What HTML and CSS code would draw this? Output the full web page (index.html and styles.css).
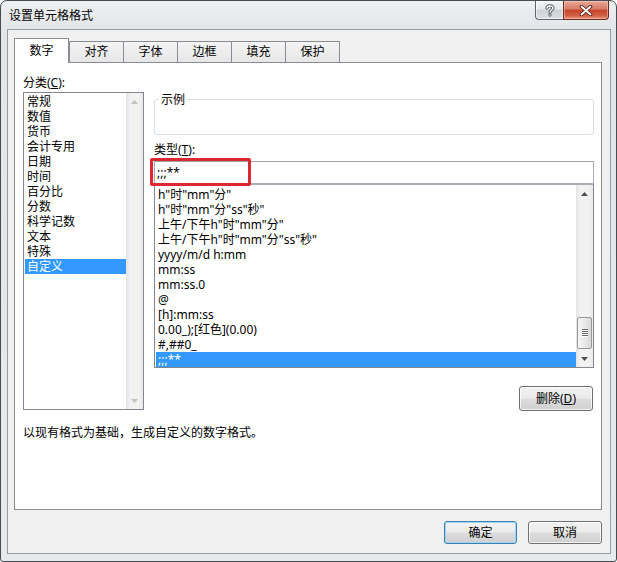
FILE: index.html
```html
<!DOCTYPE html>
<html lang="zh-CN">
<head>
<meta charset="utf-8">
<title>设置单元格格式</title>
<link rel="stylesheet" href="styles.css">
</head>
<body>
<div class="window">
  <div class="titlebar">
    <div class="title">设置单元格格式</div>
    <div class="caps">
      <div class="cap help">
        <svg width="10" height="13" viewBox="0 0 10 13">
          <path d="M2 4 C2 1.5 8 1 8 4 C8 6 5 6 5 8.3" fill="none" stroke="#4b5560" stroke-width="3.2" stroke-linecap="round"/>
          <circle cx="5" cy="11" r="1.6" fill="#4b5560"/>
          <path d="M2 4 C2 1.5 8 1 8 4 C8 6 5 6 5 8.3" fill="none" stroke="#ffffff" stroke-width="1.4" stroke-linecap="round"/>
          <circle cx="5" cy="11" r="0.8" fill="#ffffff"/>
        </svg>
      </div>
      <div class="cap close">
        <svg width="14" height="11" viewBox="0 0 14 11">
          <path d="M2.5 1.5 L11.5 9.5 M11.5 1.5 L2.5 9.5" stroke="#5a2016" stroke-width="3.6" stroke-linecap="round"/>
          <path d="M2.5 1.5 L11.5 9.5 M11.5 1.5 L2.5 9.5" stroke="#ffffff" stroke-width="1.8" stroke-linecap="round"/>
        </svg>
      </div>
    </div>
  </div>
  <div class="client">
    <div class="tabs">
      <div class="tab active">数字</div>
      <div class="tab">对齐</div>
      <div class="tab">字体</div>
      <div class="tab">边框</div>
      <div class="tab">填充</div>
      <div class="tab">保护</div>
    </div>
    <div class="panel">
      <div class="cols">
        <div class="left">
          <div class="label">分类(<u>C</u>):</div>
          <div class="listbox cat">
            <div class="items">
              <div class="item">常规</div>
              <div class="item">数值</div>
              <div class="item">货币</div>
              <div class="item">会计专用</div>
              <div class="item">日期</div>
              <div class="item">时间</div>
              <div class="item">百分比</div>
              <div class="item">分数</div>
              <div class="item">科学记数</div>
              <div class="item">文本</div>
              <div class="item">特殊</div>
              <div class="item sel">自定义</div>
            </div>
            <div class="vscroll disabled">
              <div class="arrow"><svg width="7" height="4" viewBox="0 0 7 4"><path d="M0 4 L3.5 0 L7 4 Z"/></svg></div>
              <div class="track"></div>
              <div class="arrow"><svg width="7" height="4" viewBox="0 0 7 4"><path d="M0 0 L3.5 4 L7 0 Z"/></svg></div>
            </div>
          </div>
        </div>
        <div class="right">
          <div class="sample">
            <div class="legend">示例</div>
          </div>
          <div class="label type-label">类型(<u>T</u>):</div>
          <div class="input">;;;**</div>
          <div class="listbox types">
            <div class="items">
              <div class="item">h"时"mm"分"</div>
              <div class="item">h"时"mm"分"ss"秒"</div>
              <div class="item">上午/下午h"时"mm"分"</div>
              <div class="item">上午/下午h"时"mm"分"ss"秒"</div>
              <div class="item">yyyy/m/d h:mm</div>
              <div class="item">mm:ss</div>
              <div class="item">mm:ss.0</div>
              <div class="item">@</div>
              <div class="item">[h]:mm:ss</div>
              <div class="item">0.00_);[红色](0.00)</div>
              <div class="item">#,##0_</div>
              <div class="item sel">;;;**</div>
            </div>
            <div class="vscroll">
              <div class="arrow"><svg width="7" height="4" viewBox="0 0 7 4"><path d="M0 4 L3.5 0 L7 4 Z"/></svg></div>
              <div class="track">
                <div class="thumb">
                  <svg width="6" height="8" viewBox="0 0 6 8">
                    <path d="M0 0.5 H6 M0 2.5 H6 M0 4.5 H6 M0 6.5 H6" stroke="#6b6b6b" stroke-width="1"/>
                    <path d="M0 1.5 H6 M0 3.5 H6 M0 5.5 H6 M0 7.5 H6" stroke="#ffffff" stroke-width="1"/>
                  </svg>
                </div>
              </div>
              <div class="arrow"><svg width="7" height="4" viewBox="0 0 7 4"><path d="M0 0 L3.5 4 L7 0 Z"/></svg></div>
            </div>
          </div>
          <div class="del-row">
            <button class="btn del">删除(<u>D</u>)</button>
          </div>
        </div>
      </div>
      <div class="desc">以现有格式为基础，生成自定义的数字格式。</div>
    </div>
    <div class="footer">
      <button class="btn ok default">确定</button>
      <button class="btn cancel">取消</button>
    </div>
  </div>
  <div class="redbox"></div>
</div>
</body>
</html>
```

FILE: styles.css
```css
html, body {
  margin: 0;
  padding: 0;
}
body {
  width: 617px;
  height: 562px;
  overflow: hidden;
  font-family: "Noto Sans", "Noto Sans CJK SC", sans-serif;
  font-size: 12px;
  color: #000;
  background: #ffffff;
}
.window {
  position: relative;
  box-sizing: border-box;
  width: 617px;
  height: 562px;
  border: 1px solid #474c52;
  border-radius: 7px 7px 3px 3px;
  background: linear-gradient(#eef0f2, #e3e6e9 28px, #e7e9ec);
  padding: 0 5px 7px 6px;
  display: flex;
  flex-direction: column;
}
.titlebar {
  height: 28px;
  display: flex;
  justify-content: space-between;
  align-items: flex-start;
  padding: 0 2px;
}
.title {
  padding-top: 8px;
  line-height: 14px;
  color: #000;
}
.caps {
  display: flex;
}
.cap {
  box-sizing: border-box;
  height: 19px;
  border: 1px solid #5f666e;
  border-top: none;
  display: flex;
  align-items: center;
  justify-content: center;
}
.help {
  width: 28px;
  border-right: none;
  border-radius: 0 0 0 4px;
  background: linear-gradient(#f3f4f6, #e3e6ea 45%, #ccd1d7 52%, #dce0e5);
  box-shadow: inset 0 0 0 1px rgba(255,255,255,0.6);
}
.close {
  width: 46px;
  border-color: #6b2a1f;
  border-radius: 0 0 4px 0;
  background: linear-gradient(#eaa99b, #d87a65 45%, #c5452c 52%, #d25f44 80%, #e5957c);
  box-shadow: inset 0 0 0 1px rgba(255,220,200,0.45);
}
.client {
  box-sizing: border-box;
  height: 525px;
  border: 1px solid #989ba0;
  background: #f0f0f0;
  padding: 8px 8px 9px 6px;
  display: flex;
  flex-direction: column;
}
.tabs {
  display: flex;
  align-items: flex-end;
  height: 24px;
}
.tab {
  box-sizing: border-box;
  width: 55px;
  height: 21px;
  margin-left: -1px;
  border: 1px solid #898c95;
  border-bottom: none;
  background: linear-gradient(#f4f4f4, #e6e6e6);
  text-align: center;
  line-height: 19px;
}
.tab.active {
  width: 55px;
  height: 25px;
  margin-left: 0;
  margin-bottom: -1px;
  background: #ffffff;
  position: relative;
  z-index: 1;
  line-height: 23px;
}
.tab.active + .tab {
  margin-left: 0;
}
.panel {
  box-sizing: border-box;
  height: 448px;
  border: 1px solid #898c95;
  background: #ffffff;
  padding: 12px 7px 0 8px;
}
.cols {
  display: flex;
  gap: 10px;
}
.left {
  width: 121px;
}
.label {
  height: 15px;
  line-height: 15px;
  white-space: nowrap;
}
.listbox {
  box-sizing: border-box;
  border: 1px solid #828790;
  background: #ffffff;
  display: flex;
  overflow: hidden;
}
.cat {
  margin-top: 2px;
  height: 318px;
}
.cat .items {
  width: 101px;
  margin-left: 1px;
  padding-top: 1px;
}
.item {
  height: 15px;
  line-height: 15px;
  padding-left: 2px;
  white-space: nowrap;
}
.item.sel {
  background: #3399ff;
  color: #ffffff;
}
.vscroll {
  width: 17px;
  margin-left: auto;
  display: flex;
  flex-direction: column;
  background: linear-gradient(to right, #e3e3e3, #f2f2f2 25%, #f2f2f2 75%, #e9e9e9);
}
.arrow {
  height: 17px;
  display: flex;
  align-items: center;
  justify-content: center;
  flex: none;
}
.arrow svg path {
  fill: #4f4f4f;
}
.disabled .arrow svg path {
  fill: #c2c2c2;
}
.track {
  flex: 1;
  display: flex;
  flex-direction: column;
  justify-content: flex-end;
}
.thumb {
  box-sizing: border-box;
  height: 32px;
  margin: 0 1px 1px 1px;
  border: 1px solid #979797;
  border-radius: 2px;
  background: linear-gradient(to right, #f6f6f6, #e9e9e9 50%, #d8d8d8);
  display: flex;
  align-items: center;
  justify-content: center;
}
.right {
  width: 440px;
  display: flex;
  flex-direction: column;
}
.sample {
  box-sizing: border-box;
  margin-top: 24px;
  height: 36px;
  border: 1px solid #d5dfe5;
  border-radius: 3px;
}
.legend {
  width: fit-content;
  margin: -7px 0 0 4px;
  padding: 0 2px;
  background: #ffffff;
  line-height: 14px;
}
.type-label {
  margin-top: 7px;
}
.input {
  box-sizing: border-box;
  margin-top: 4px;
  height: 23px;
  border: 1px solid #a9aeb6;
  border-top-color: #9ea3ab;
  padding-left: 2px;
  line-height: 21px;
  background: #ffffff;
}
.types {
  height: 184px;
  border-top-color: #a9aeb6;
}
.types .items {
  width: 420px;
  margin-left: 1px;
  padding-top: 2px;
}
.del-row {
  display: flex;
  justify-content: flex-end;
  margin-top: 18px;
  padding-right: 1px;
}
.btn {
  box-sizing: border-box;
  height: 23px;
  padding: 0;
  border: 1px solid #707070;
  border-radius: 3px;
  background: linear-gradient(#f2f2f2, #ebebeb 48%, #dddddd 52%, #cfcfcf);
  box-shadow: inset 0 0 0 1px rgba(255,255,255,0.75);
  font-family: "Noto Sans", "Noto Sans CJK SC", sans-serif;
  font-size: 12px;
  line-height: 21px;
  color: #000;
}
.del {
  width: 74px;
  height: 25px;
  line-height: 23px;
}
.desc {
  margin-top: 14px;
  line-height: 15px;
  white-space: nowrap;
}
.footer {
  margin-top: 11px;
  display: flex;
  justify-content: flex-end;
  gap: 11px;
}
.ok {
  width: 73px;
}
.cancel {
  width: 74px;
}
.default {
  border-color: #3c7fb1;
  box-shadow: inset 0 0 0 1px #9ad8f4;
}
.redbox {
  position: absolute;
  left: 149px;
  top: 157px;
  width: 101px;
  height: 28px;
  box-sizing: border-box;
  border: 3px solid #dc2832;
  border-radius: 2px;
}
```
